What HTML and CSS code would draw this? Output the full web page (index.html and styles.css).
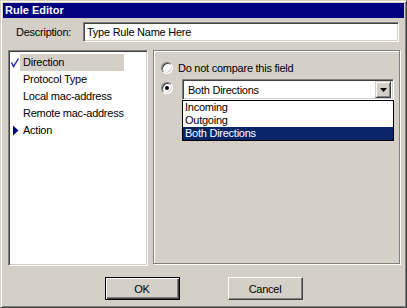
FILE: index.html
```html
<!DOCTYPE html>
<html lang="en">
<head>
<meta charset="utf-8">
<title>Rule Editor</title>
<link rel="stylesheet" href="styles.css">
</head>
<body>
<div class="window">
  <div class="title">Rule Editor</div>
  <div class="desc">
    <label for="rulename">Description:</label>
    <input id="rulename" class="sunken field" value="Type Rule Name Here" readonly>
  </div>
  <div class="main">
    <ul class="list sunken">
      <li class="item">
        <span class="mark">
          <svg width="9" height="10" viewBox="0 0 9 10"><path d="M0.5 4.5 L2.5 8.5 L7.5 0.5" fill="none" stroke="#1c1cc4" stroke-width="1.4"/></svg>
        </span>
        <span class="label selected">Direction</span>
      </li>
      <li class="item"><span class="mark"></span><span class="label">Protocol Type</span></li>
      <li class="item"><span class="mark"></span><span class="label">Local mac-address</span></li>
      <li class="item"><span class="mark"></span><span class="label">Remote mac-address</span></li>
      <li class="item">
        <span class="mark">
          <svg width="9" height="11" viewBox="0 0 9 11"><polygon points="2,0.5 7.5,5.5 2,10.5" fill="#000080"/></svg>
        </span>
        <span class="label">Action</span>
      </li>
    </ul>
    <div class="panel">
      <div class="opt">
        <span class="radio"></span>
        <span>Do not compare this field</span>
      </div>
      <div class="opt choose">
        <span class="radio checked"></span>
        <div class="combo">
          <div class="combo-box sunken">
            <span class="combo-text">Both Directions</span>
            <span class="combo-btn">
              <svg width="7" height="4" viewBox="0 0 7 4"><polygon points="0,0 7,0 3.5,4" fill="#000"/></svg>
            </span>
          </div>
          <ul class="dropdown">
            <li>Incoming</li>
            <li>Outgoing</li>
            <li class="hl">Both Directions</li>
          </ul>
        </div>
      </div>
    </div>
  </div>
  <div class="buttons">
    <button type="button" class="btn default">OK</button>
    <button type="button" class="btn">Cancel</button>
  </div>
</div>
</body>
</html>
```
FILE: styles.css
```css
html, body {
  margin: 0;
  background: #d4d0c8;
}
body {
  font: 11px "Liberation Sans", Arial, sans-serif;
  letter-spacing: -0.25px;
  color: #000;
}
.window {
  box-sizing: border-box;
  width: 407px;
  height: 308px;
  padding: 2px;
  border: 1px solid;
  border-color: #d4d0c8 #404040 #404040 #d4d0c8;
  box-shadow: inset 1px 1px #fff, inset -1px -1px #808080;
  background: #d4d0c8;
}
.title {
  height: 15px;
  line-height: 15px;
  padding-left: 2px;
  background: #000080;
  color: #fff;
  font-weight: bold;
  letter-spacing: 0;
}
.sunken {
  border: 1px solid;
  border-color: #808080 #fff #fff #808080;
  box-shadow: inset 1px 1px #404040, inset -1px -1px #d4d0c8;
  background: #fff;
}
.desc {
  display: grid;
  grid-template-columns: 67px 1fr;
  align-items: center;
  height: 20px;
  margin-top: 4px;
  padding: 0 5px 0 13px;
}
.field {
  box-sizing: border-box;
  height: 20px;
  margin: 0;
  padding: 0 3px;
  font: inherit;
  letter-spacing: inherit;
  outline: none;
}
.main {
  display: flex;
  align-items: flex-start;
  gap: 5px;
  margin-top: 8px;
  padding-left: 5px;
}
.list {
  box-sizing: border-box;
  width: 140px;
  height: 216px;
  margin: 0;
  padding: 3px 2px;
  list-style: none;
}
.item {
  display: flex;
  height: 17px;
  align-items: center;
}
.mark {
  display: flex;
  width: 9px;
  justify-content: flex-start;
  align-items: center;
}
.label {
  min-width: 101px;
  height: 17px;
  line-height: 17px;
  padding-left: 3px;
  white-space: nowrap;
}
.label.selected {
  background: #d4d0c8;
}
.panel {
  box-sizing: border-box;
  width: 247px;
  height: 214px;
  padding: 11px 0 0 7px;
  border: 1px solid #808080;
  box-shadow: inset 1px 1px #fff, 1px 1px #fff;
}
.opt {
  display: flex;
  align-items: center;
  gap: 5px;
}
.opt.choose {
  align-items: flex-start;
  margin-top: 5px;
  gap: 9px;
}
.choose .radio {
  margin-top: 3px;
}
.radio {
  position: relative;
  box-sizing: border-box;
  width: 12px;
  height: 12px;
  border: 1px solid;
  border-color: #808080 #fff #fff #808080;
  border-radius: 50%;
  box-shadow: inset 1px 1px #404040, inset -1px -1px #d4d0c8;
  background: #fff;
}
.radio.checked::after {
  content: "";
  position: absolute;
  left: 3px;
  top: 3px;
  width: 4px;
  height: 4px;
  border-radius: 50%;
  background: #000;
}
.combo {
  position: relative;
  width: 212px;
}
.combo-box {
  box-sizing: border-box;
  display: flex;
  align-items: center;
  height: 21px;
  padding: 2px;
}
.combo-text {
  flex: 1;
  padding-left: 3px;
}
.combo-btn {
  box-sizing: border-box;
  display: flex;
  align-items: center;
  justify-content: center;
  width: 16px;
  height: 17px;
  border: 1px solid;
  border-color: #d4d0c8 #404040 #404040 #d4d0c8;
  box-shadow: inset 1px 1px #fff, inset -1px -1px #808080;
  background: #d4d0c8;
}
.dropdown {
  position: absolute;
  left: 0;
  top: 21px;
  box-sizing: border-box;
  width: 212px;
  margin: 0;
  padding: 0;
  border: 1px solid #000;
  background: #fff;
  list-style: none;
}
.dropdown li {
  height: 13px;
  line-height: 13px;
  padding-left: 2px;
}
.dropdown .hl {
  background: #0a246a;
  color: #fff;
}
.buttons {
  display: flex;
  justify-content: center;
  gap: 48px;
  margin-top: 11px;
}
.btn {
  box-sizing: border-box;
  width: 75px;
  height: 23px;
  padding: 0;
  border: 1px solid;
  border-color: #fff #404040 #404040 #fff;
  box-shadow: inset -1px -1px #808080;
  background: #d4d0c8;
  font: inherit;
  letter-spacing: inherit;
  color: #000;
}
.btn.default {
  border-color: #000;
  box-shadow: inset 1px 1px #fff, inset -1px -1px #404040, inset -2px -2px #808080;
}
```
